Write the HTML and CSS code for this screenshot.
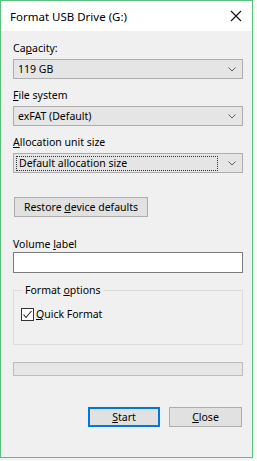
FILE: index.html
```html
<html lang="en">
  <head>
    <meta charset="UTF-8" />
    <title>Format USB Drive (G:)</title>
    <link rel="stylesheet" href="styles.css">
  </head>
  <body>
    <div class="window">
      <div class="titlebar">
        <span class="title">Format USB Drive (G:)</span>
        <svg class="close" width="12" height="12" viewBox="0 0 12 12">
          <path d="M1 1 L11 11 M11 1 L1 11" stroke="#111" stroke-width="1.1" fill="none" />
        </svg>
      </div>

      <div class="content">
        <label class="label first">Ca<u>p</u>acity:</label>
        <div class="combo">
          <span>119 GB</span>
          <svg class="chevron" width="8" height="5" viewBox="0 0 8 5"><path d="M0.5 0.5 L4 4 L7.5 0.5" stroke="#606060" fill="none" /></svg>
        </div>

        <label class="label"><u>F</u>ile system</label>
        <div class="combo">
          <span>exFAT (Default)</span>
          <svg class="chevron" width="8" height="5" viewBox="0 0 8 5"><path d="M0.5 0.5 L4 4 L7.5 0.5" stroke="#606060" fill="none" /></svg>
        </div>

        <label class="label"><u>A</u>llocation unit size</label>
        <div class="combo focused">
          <span class="focus-rect">Default allocation size</span>
          <svg class="chevron" width="8" height="5" viewBox="0 0 8 5"><path d="M0.5 0.5 L4 4 L7.5 0.5" stroke="#606060" fill="none" /></svg>
        </div>

        <button class="btn restore">Restore <u>d</u>evice defaults</button>

        <label class="label volume">Volume <u>l</u>abel</label>
        <div class="textbox"></div>

        <fieldset class="group">
          <legend>Format <u>o</u>ptions</legend>
          <div class="check-row">
            <span class="checkbox">
              <svg width="11" height="11" viewBox="0 0 11 11"><path d="M1.5 5.5 L4 8.5 L9.5 2" stroke="#222" stroke-width="1.1" fill="none" /></svg>
            </span>
            <span><u>Q</u>uick Format</span>
          </div>
        </fieldset>

        <div class="progress"></div>

        <div class="actions">
          <button class="btn default"><u>S</u>tart</button>
          <button class="btn"><u>C</u>lose</button>
        </div>
      </div>
    </div>
  </body>
</html>
```

FILE: styles.css
```css
body {
  margin: 0;
  background-color: #fbfbfb;
  font-family: "Noto Sans", "Open Sans", sans-serif;
  font-size: 10.5px;
  color: #000;
}
.window {
  width: 251px;
  height: 456px;
  border: 1px solid #5cc17c;
  display: flex;
  flex-direction: column;
  background-color: #f0f0f0;
  box-shadow: 1px 1px 3px rgba(0, 0, 0, 0.08);
}
.titlebar {
  height: 30px;
  background-color: #fff;
  display: flex;
  align-items: center;
  justify-content: space-between;
  padding: 0 10px 0 9px;
}
.title {
  font-size: 11.5px;
}
.content {
  flex: 1;
  display: flex;
  flex-direction: column;
  padding: 10px 9px 0 12px;
}
.label {
  display: block;
  line-height: 14px;
  height: 14px;
  margin: 9px 0 4px 0;
}
.label.first {
  margin-top: 0;
}
.label.volume {
  margin: 20px 0 1px 0;
}
.combo {
  height: 18px;
  border: 1px solid #adadad;
  background-color: #e5e5e5;
  display: flex;
  align-items: center;
  justify-content: space-between;
  padding: 0 6px 0 4px;
}
.combo.focused {
  padding-left: 2px;
}
.focus-rect {
  flex: 1;
  margin-right: 10px;
  line-height: 13px;
  padding: 0 2px;
  border: 1px dotted #333;
}
.btn {
  font-family: inherit;
  font-size: 10.5px;
  color: #000;
  height: 20px;
  padding: 0;
  background-color: #e1e1e1;
  border: 1px solid #adadad;
}
.restore {
  width: 134px;
  margin: 24px 0 0 1px;
}
.textbox {
  height: 19px;
  border: 1px solid #7a7a7a;
  background-color: #fff;
}
.group {
  margin: 10px 0 0 0;
  padding: 0 7px;
  height: 60px;
  border: 1px solid #dcdcdc;
}
.group legend {
  padding: 0 2px;
  margin-left: 2px;
}
.check-row {
  display: flex;
  align-items: center;
  gap: 2px;
  margin-top: 10px;
}
.checkbox {
  width: 11px;
  height: 11px;
  border: 1px solid #333;
  background-color: #fff;
  display: flex;
}
.progress {
  height: 12px;
  margin-top: 17px;
  border: 1px solid #bcbcbc;
  background-color: #e6e6e6;
}
.actions {
  display: flex;
  justify-content: flex-end;
  gap: 9px;
  margin-top: 31px;
  padding-right: 1px;
}
.actions .btn {
  width: 73px;
}
.btn.default {
  width: 72px;
  border: 2px solid #0078d7;
}
```
